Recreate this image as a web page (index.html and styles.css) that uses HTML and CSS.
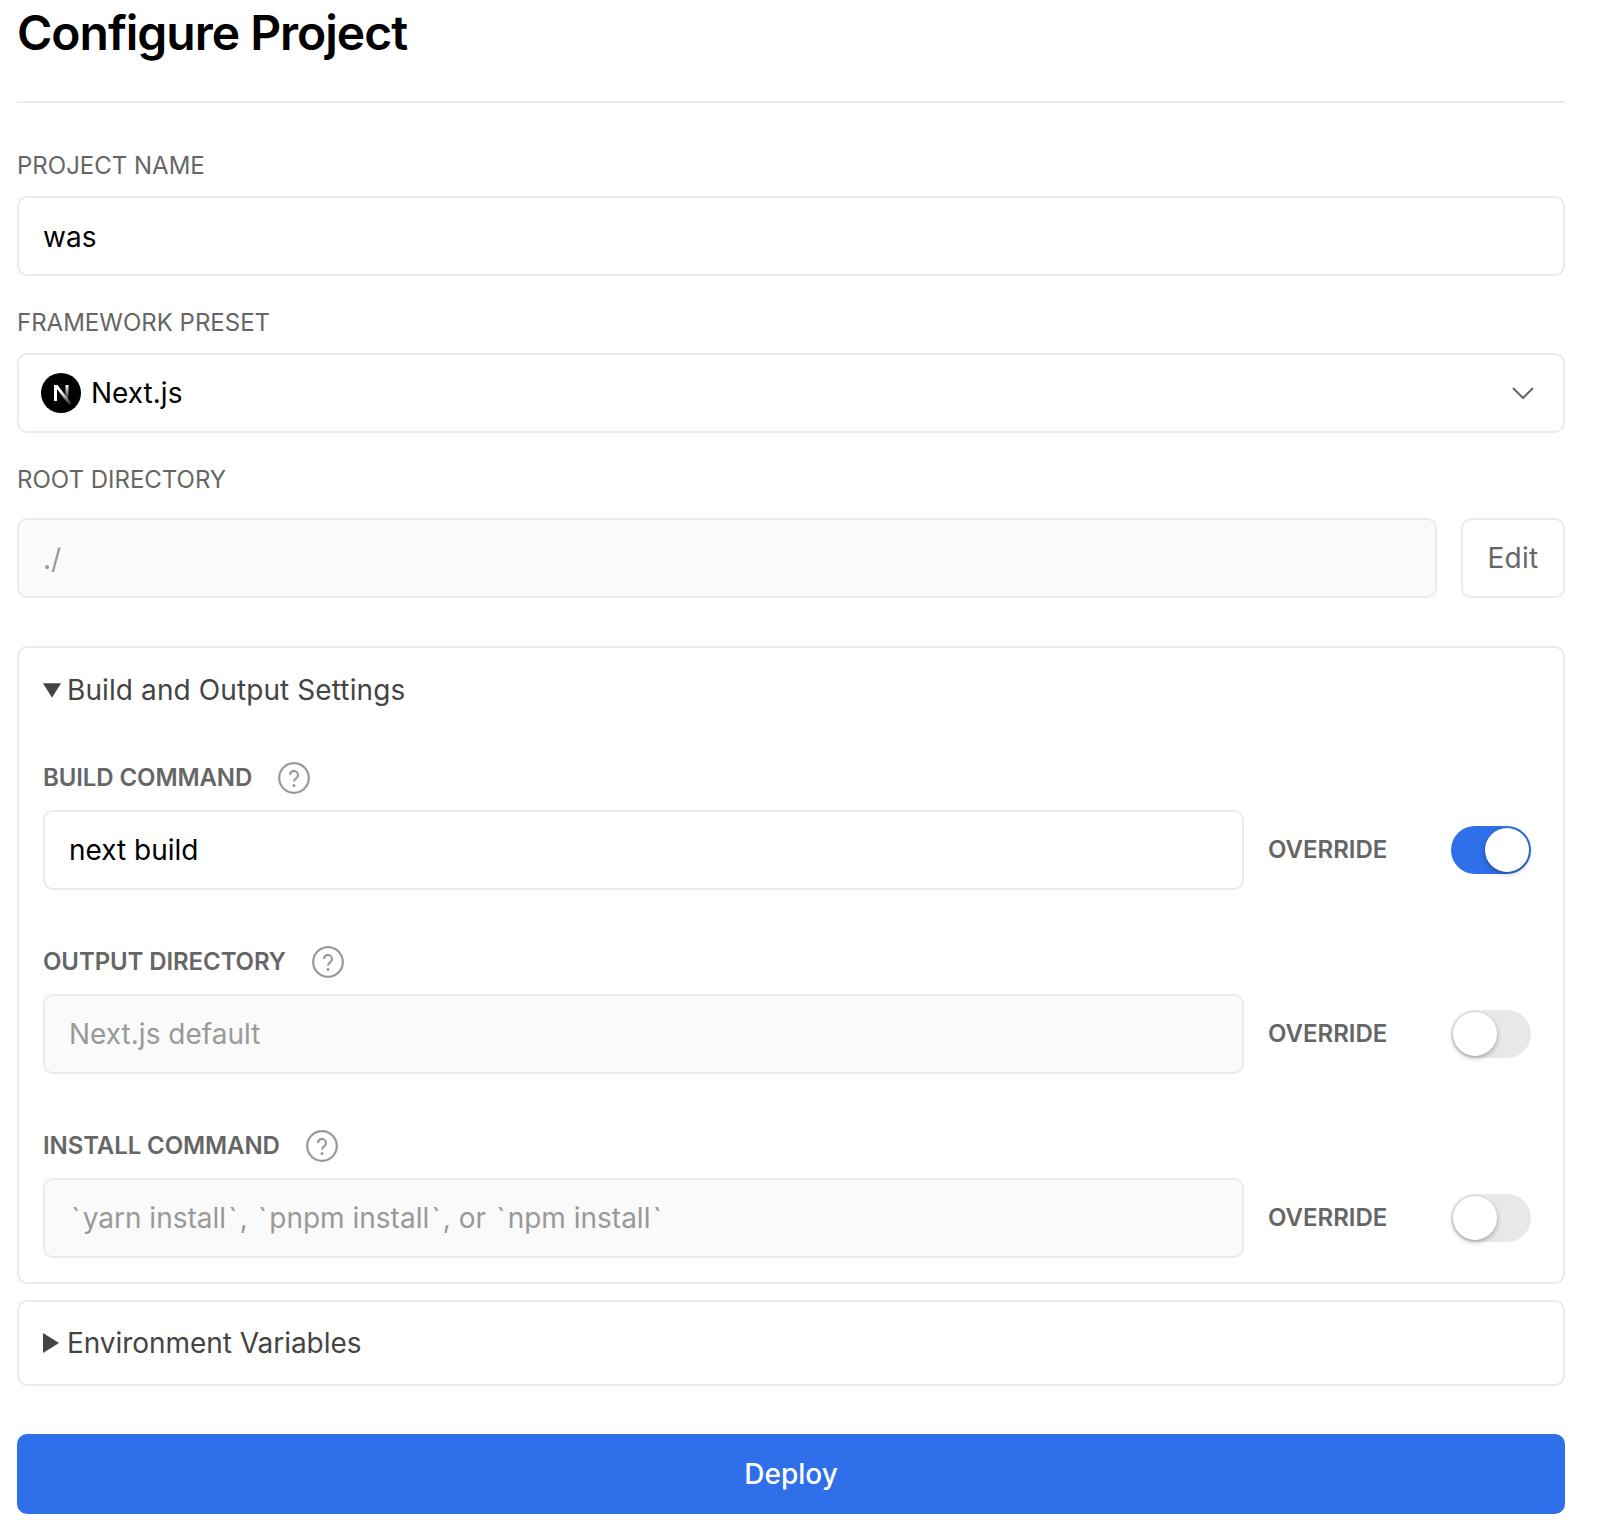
FILE: index.html
```html
<!DOCTYPE html>
<html lang="en">
<head>
    <meta charset="UTF-8">
    <title>Configure Project</title>
    <link rel="stylesheet" href="styles.css">
</head>
<body>
    <div class="container">
        <div class="header">
            <h1>Configure Project</h1>
        </div>

        <div class="form-group">
            <div class="label">PROJECT NAME</div>
            <div class="input">was</div>
        </div>

        <div class="form-group">
            <div class="label">FRAMEWORK PRESET</div>
            <div class="input select">
                <svg class="next-logo" viewBox="0 0 40 40">
                    <defs>
                        <linearGradient id="nextFade" gradientUnits="userSpaceOnUse" x1="14" y1="12" x2="30" y2="33">
                            <stop offset="0.35" stop-color="#fff"/>
                            <stop offset="1" stop-color="#fff" stop-opacity="0"/>
                        </linearGradient>
                        <linearGradient id="nextBar" x1="0" y1="0" x2="0" y2="1">
                            <stop offset="0" stop-color="#fff"/>
                            <stop offset="1" stop-color="#fff" stop-opacity="0.2"/>
                        </linearGradient>
                    </defs>
                    <circle cx="20" cy="20" r="20" fill="#000"/>
                    <rect x="13" y="12" width="3" height="16" fill="#fff"/>
                    <rect x="24.5" y="12" width="3" height="13" fill="url(#nextBar)"/>
                    <polygon points="13,12 16.5,12 32,32 29.5,34" fill="url(#nextFade)"/>
                </svg>
                <span class="select-text">Next.js</span>
                <svg class="chevron" viewBox="0 0 24 14">
                    <path d="M2 2l10 10L22 2" fill="none" stroke="#666" stroke-width="2"/>
                </svg>
            </div>
        </div>

        <div class="form-group root-group">
            <div class="label">ROOT DIRECTORY</div>
            <div class="root-row">
                <div class="input disabled">./</div>
                <div class="btn-edit">Edit</div>
            </div>
        </div>

        <div class="panel">
            <div class="summary summary-open">
                <svg class="arrow-down" viewBox="0 0 20 16"><polygon points="0,0 20,0 10,16"/></svg>
                <span>Build and Output Settings</span>
            </div>

            <div class="setting">
                <div class="label label-bold">
                    BUILD COMMAND
                    <svg class="help" viewBox="0 0 32 32">
                        <circle cx="16" cy="16" r="14.8" fill="none" stroke="#999" stroke-width="2.2"/>
                        <path d="M12 13a4 4 0 1 1 6.3 3.2c-1.4 1-2.3 1.8-2.3 3.3" fill="none" stroke="#999" stroke-width="2.2"/>
                        <circle cx="16" cy="23.5" r="1.5" fill="#999"/>
                    </svg>
                </div>
                <div class="setting-row">
                    <div class="input">next build</div>
                    <div class="override">OVERRIDE</div>
                    <div class="toggle on"><div class="knob"></div></div>
                </div>
            </div>

            <div class="setting">
                <div class="label label-bold">
                    OUTPUT DIRECTORY
                    <svg class="help" viewBox="0 0 32 32">
                        <circle cx="16" cy="16" r="14.8" fill="none" stroke="#999" stroke-width="2.2"/>
                        <path d="M12 13a4 4 0 1 1 6.3 3.2c-1.4 1-2.3 1.8-2.3 3.3" fill="none" stroke="#999" stroke-width="2.2"/>
                        <circle cx="16" cy="23.5" r="1.5" fill="#999"/>
                    </svg>
                </div>
                <div class="setting-row">
                    <div class="input disabled">Next.js default</div>
                    <div class="override">OVERRIDE</div>
                    <div class="toggle"><div class="knob"></div></div>
                </div>
            </div>

            <div class="setting">
                <div class="label label-bold">
                    INSTALL COMMAND
                    <svg class="help" viewBox="0 0 32 32">
                        <circle cx="16" cy="16" r="14.8" fill="none" stroke="#999" stroke-width="2.2"/>
                        <path d="M12 13a4 4 0 1 1 6.3 3.2c-1.4 1-2.3 1.8-2.3 3.3" fill="none" stroke="#999" stroke-width="2.2"/>
                        <circle cx="16" cy="23.5" r="1.5" fill="#999"/>
                    </svg>
                </div>
                <div class="setting-row">
                    <div class="input disabled"><span class="tick">`</span>yarn install<span class="tick">`</span>, <span class="tick">`</span>pnpm install<span class="tick">`</span>, or <span class="tick">`</span>npm install<span class="tick">`</span></div>
                    <div class="override">OVERRIDE</div>
                    <div class="toggle"><div class="knob"></div></div>
                </div>
            </div>
        </div>

        <div class="panel panel-closed">
            <div class="summary summary-closed">
                <svg class="arrow-right" viewBox="0 0 16 20"><polygon points="0,0 16,10 0,20"/></svg>
                <span>Environment Variables</span>
            </div>
        </div>

        <div class="btn-deploy">Deploy</div>
    </div>
</body>
</html>
```

FILE: styles.css
```css
* {
    margin: 0;
    padding: 0;
    box-sizing: border-box;
}

body {
    font-family: Inter, 'Noto Sans', sans-serif;
    background: #fff;
    color: #000;
}

.container {
    margin: 0 37px 0 17px;
    display: flex;
    flex-direction: column;
}

.header {
    height: 103px;
    border-bottom: 2px solid #eaeaea;
    margin-bottom: 47px;
}

.header h1 {
    font-size: 48px;
    font-weight: 600;
    line-height: 66px;
    letter-spacing: -1.02px;
}

.form-group {
    margin-bottom: 31px;
}

.form-group .input {
    line-height: 78px;
}

.label {
    font-size: 24px;
    line-height: 32px;
    color: #666;
    margin-bottom: 14px;
}

.label-bold {
    display: flex;
    align-items: center;
    gap: 26px;
    font-weight: 600;
    height: 32px;
    margin-top: -1px;
    margin-bottom: 16px;
    letter-spacing: -0.1px;
}

.input {
    height: 80px;
    border: 2px solid #eaeaea;
    border-radius: 10px;
    padding: 0 24px;
    background: #fff;
    font-size: 28px;
    line-height: 76px;
    flex: 1;
}

.input.disabled {
    background: #fafafa;
    color: #999;
}

.tick {
    margin: 0 2.3px;
}

.select {
    display: flex;
    align-items: center;
    gap: 10px;
    padding-left: 22px;
}

.next-logo {
    width: 40px;
    height: 40px;
}

.select-text {
    flex: 1;
}

.chevron {
    width: 24px;
    height: 14px;
    margin-right: 4px;
}

.root-group {
    margin-bottom: 48px;
}

.root-group .label {
    margin-bottom: 22px;
}

.root-row {
    display: flex;
    gap: 24px;
}

.btn-edit {
    width: 104px;
    height: 80px;
    border: 2px solid #eaeaea;
    border-radius: 10px;
    font-size: 28px;
    line-height: 76px;
    letter-spacing: 0.3px;
    text-align: center;
    color: #666;
}

.panel {
    border: 2px solid #eaeaea;
    border-radius: 10px;
    padding: 0 32px 24px 24px;
    margin-bottom: 16px;
}

.panel-closed {
    height: 86px;
    padding-bottom: 0;
    margin-bottom: 48px;
}

.summary {
    display: flex;
    align-items: center;
    gap: 4px;
    height: 82px;
    font-size: 28px;
    color: #444;
}

.summary-open {
    height: 84px;
    margin-bottom: 31px;
    letter-spacing: 0.1px;
}

.summary-closed {
    letter-spacing: -0.05px;
}

.arrow-down {
    width: 18px;
    height: 15px;
    margin-right: 2px;
    fill: #444;
}

.arrow-right {
    width: 16px;
    height: 20px;
    fill: #444;
    margin-right: 4px;
}

.setting {
    margin-bottom: 57px;
}

.setting:last-child {
    margin-bottom: 0;
}

.help {
    width: 32px;
    height: 32px;
}

.setting-row {
    display: flex;
    align-items: center;
}

.override {
    width: 183px;
    margin-left: 24px;
    padding-bottom: 2px;
    font-size: 24px;
    font-weight: 600;
    color: #666;
}

.toggle {
    width: 80px;
    height: 48px;
    border-radius: 24px;
    background: #e8e8e8;
    display: flex;
    align-items: center;
    justify-content: flex-start;
    padding: 2px;
}

.toggle.on {
    background: #2f6fe9;
    justify-content: flex-end;
}

.knob {
    width: 44px;
    height: 44px;
    border-radius: 50%;
    background: #fff;
    box-shadow: 0 2px 5px rgba(0, 0, 0, 0.3);
}

.btn-deploy {
    height: 80px;
    border-radius: 10px;
    background: #2f6fe9;
    color: #fff;
    font-size: 28px;
    font-weight: 500;
    line-height: 80px;
    text-align: center;
    margin-bottom: 23px;
}
```
